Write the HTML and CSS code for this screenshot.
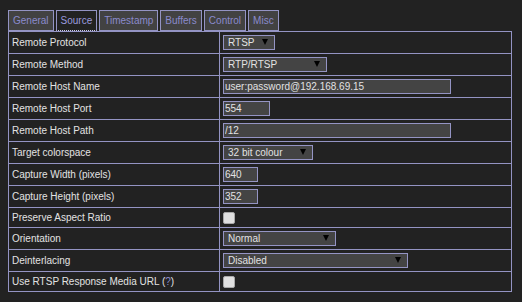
FILE: index.html
```html
<!DOCTYPE html>
<html lang="en">
<head>
    <meta charset="UTF-8">
    <title>Source settings</title>
    <link rel="stylesheet" href="styles.css">
</head>
<body>
    <nav class="tabs">
        <a class="tab">General</a>
        <a class="tab active">Source</a>
        <a class="tab">Timestamp</a>
        <a class="tab">Buffers</a>
        <a class="tab">Control</a>
        <a class="tab">Misc</a>
    </nav>

    <div class="settings">
        <div class="label">Remote Protocol</div>
        <div class="value">
            <span class="select-wrap w-proto"><select><option>RTSP</option></select></span>
        </div>

        <div class="label">Remote Method</div>
        <div class="value">
            <span class="select-wrap w-method"><select><option>RTP/RTSP</option></select></span>
        </div>

        <div class="label">Remote Host Name</div>
        <div class="value"><input class="field w-long" type="text" value="user:password@192.168.69.15"></div>

        <div class="label">Remote Host Port</div>
        <div class="value"><input class="field w-port" type="text" value="554"></div>

        <div class="label">Remote Host Path</div>
        <div class="value"><input class="field w-long" type="text" value="/12"></div>

        <div class="label">Target colorspace</div>
        <div class="value">
            <span class="select-wrap w-colour"><select><option>32 bit colour</option></select></span>
        </div>

        <div class="label">Capture Width (pixels)</div>
        <div class="value"><input class="field w-num" type="text" value="640"></div>

        <div class="label">Capture Height (pixels)</div>
        <div class="value"><input class="field w-num" type="text" value="352"></div>

        <div class="label check-row">Preserve Aspect Ratio</div>
        <div class="value check-row"><input class="check" type="checkbox"></div>

        <div class="label">Orientation</div>
        <div class="value">
            <span class="select-wrap w-orient"><select><option>Normal</option></select></span>
        </div>

        <div class="label">Deinterlacing</div>
        <div class="value">
            <span class="select-wrap w-deint"><select><option>Disabled</option></select></span>
        </div>

        <div class="label check-row">Use RTSP Response Media URL (<span class="help">?</span>)</div>
        <div class="value check-row"><input class="check" type="checkbox"></div>
    </div>
</body>
</html>
```

FILE: styles.css
```css
body {
    margin: 8px;
    background-color: #222222;
    color: #e2e2e2;
    font-family: "Liberation Sans", Arial, sans-serif;
    font-size: 10px;
}

.tabs {
    display: flex;
    gap: 2px;
    margin-top: 2px;
}
.tab {
    display: block;
    height: 19px;
    line-height: 19px;
    padding: 0 4px;
    border: 1px solid #9494c4;
    background-color: #424242;
    color: #8a8acc;
    cursor: pointer;
}
.tab.active {
    background-color: #222222;
    color: #9a9ade;
    border-bottom: 1px dotted #c8c8e8;
}

.settings {
    display: grid;
    grid-template-columns: 211px 292px;
    width: 503px;
    border-left: 1px solid #9494c4;
    border-top: 1px solid #9494c4;
}
.label,
.value {
    display: flex;
    align-items: center;
    height: 21px;
    padding: 0 3px;
    border-right: 1px solid #9494c4;
    border-bottom: 1px solid #9494c4;
}
.label.check-row,
.value.check-row {
    height: 19px;
}
.help {
    color: #8a8acc;
}

.field {
    box-sizing: border-box;
    height: 15px;
    margin: 0;
    padding: 0 1px;
    border: 1px solid #9494c4;
    background-color: #444444;
    color: #e2e2e2;
    font-family: inherit;
    font-size: 10px;
    outline: none;
}
.w-long { width: 228px; }
.w-port { width: 47px; }
.w-num { width: 35px; }

.select-wrap {
    position: relative;
    display: block;
    height: 15px;
}
.select-wrap select {
    appearance: none;
    -webkit-appearance: none;
    box-sizing: border-box;
    width: 100%;
    height: 15px;
    margin: 0;
    padding: 0 0 0 4px;
    border: 1px solid #9494c4;
    border-radius: 0;
    background-color: #444444;
    color: #e2e2e2;
    font-family: inherit;
    font-size: 10px;
    line-height: 13px;
    outline: none;
}
/* drop-down arrow */
.select-wrap::after {
    content: "";
    position: absolute;
    right: 7px;
    top: 4px;
    border-left: 3px solid transparent;
    border-right: 3px solid transparent;
    border-top: 6px solid #000000;
    pointer-events: none;
}
.w-proto { width: 52px; }
.w-method { width: 104px; }
.w-colour { width: 90px; }
.w-orient { width: 113px; }
.w-deint { width: 185px; }

.check {
    appearance: none;
    -webkit-appearance: none;
    box-sizing: border-box;
    width: 12px;
    height: 12px;
    margin: 0;
    border: 1px solid #a8a8a8;
    border-radius: 2px;
    background-color: #e0e0e0;
}
```
